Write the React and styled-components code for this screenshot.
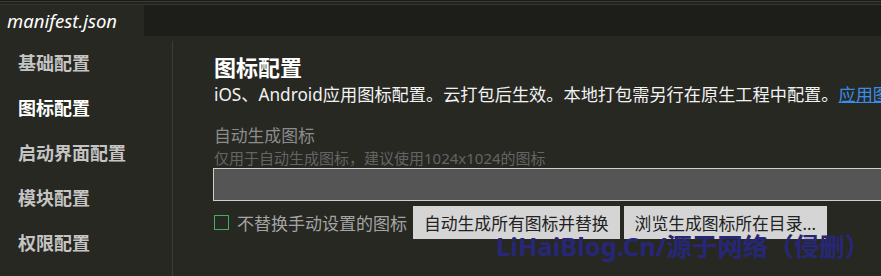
import styled, { createGlobalStyle } from "styled-components";

const GlobalStyle = createGlobalStyle`
  html, body {
    margin: 0;
    padding: 0;
    background: #272822;
  }
  * {
    box-sizing: border-box;
  }
`;

const FONT = `"Noto Sans", "Noto Sans CJK SC", sans-serif`;

const Window = styled.div`
  position: relative;
  width: 881px;
  height: 276px;
  overflow: hidden;
  background: #272822;
  font-family: ${FONT};
`;

const Strip = styled.div`
  height: 5px;
  background: linear-gradient(
    to bottom,
    #1b1c19 0px,
    #1b1c19 1px,
    #3a3b35 1px,
    #3a3b35 2px,
    #22231f 2px,
    #22231f 4px,
    #35362f 4px,
    #35362f 5px
  );
`;

const TabBar = styled.div`
  display: flex;
  height: 31px;
  background: #1d1e1a;
`;

const Tab = styled.div`
  width: 144px;
  padding-left: 7px;
  display: flex;
  align-items: center;
  background: ${({ active }) => (active ? "#272822" : "transparent")};
  color: #ffffff;
  font-style: italic;
  font-size: 18.5px;
`;

const Body = styled.div`
  display: flex;
  height: 240px;
`;

const Sidebar = styled.nav`
  width: 173px;
  flex-shrink: 0;
  margin-top: 5px;
  border-right: 1px solid #3b3c37;
`;

const NavItem = styled.div`
  height: 45px;
  line-height: 45px;
  padding-left: 18px;
  font-size: 18px;
  font-weight: bold;
  color: ${({ active }) => (active ? "#ffffff" : "#c4c4c4")};
`;

const Content = styled.main`
  flex: 1;
  min-width: 0;
  padding: 17px 0 0 41px;
  overflow: hidden;
  white-space: nowrap;
`;

const Title = styled.h1`
  margin: 0;
  font-size: 22px;
  line-height: 28px;
  font-weight: bold;
  color: #ffffff;
`;

const Desc = styled.p`
  margin: 2px 0 0;
  font-size: 17.2px;
  line-height: 24px;
  color: #f2f2f2;
`;

const Link = styled.a`
  color: #3a8ee8;
  text-decoration: underline;
`;

const Label = styled.div`
  margin-top: 17px;
  font-size: 16.8px;
  line-height: 24px;
  color: #8c8c8c;
`;

const Hint = styled.div`
  font-size: 15px;
  line-height: 20px;
  color: #646464;
`;

const PathInput = styled.div`
  width: 720px;
  height: 33px;
  margin-left: -1px;
  background: #555555;
  border: 1px solid #cfcfcf;
`;

const ActionRow = styled.div`
  display: flex;
  align-items: center;
  margin-top: 5px;
  height: 33px;
`;

const Check = styled.span`
  width: 15px;
  height: 15px;
  border: 1px solid #3fae5d;
  margin-right: 8px;
`;

const CheckLabel = styled.span`
  font-size: 17px;
  color: #a4a4a4;
  margin-right: 6px;
`;

const Button = styled.button`
  height: 33px;
  padding: 0 11px;
  margin-right: 4px;
  border: none;
  background: #d5d5d5;
  color: #222222;
  font-family: ${FONT};
  font-size: 16.8px;
`;

const Watermark = styled.div`
  position: absolute;
  left: 496px;
  top: 232px;
  font-size: 25.5px;
  line-height: 28px;
  font-weight: bold;
  color: #27277a;
  white-space: nowrap;
  pointer-events: none;
`;

const menu = ["基础配置", "图标配置", "启动界面配置", "模块配置", "权限配置"];

export default function App() {
  return (
    <>
      <GlobalStyle />
      <Window>
        <Strip />
        <TabBar>
          <Tab active>manifest.json</Tab>
        </TabBar>
        <Body>
          <Sidebar>
            {menu.map((m) => (
              <NavItem key={m} active={m === "图标配置"}>
                {m}
              </NavItem>
            ))}
          </Sidebar>
          <Content>
            <Title>图标配置</Title>
            <Desc>
              iOS、Android应用图标配置。云打包后生效。本地打包需另行在原生工程中配置。
              <Link>应用图标配置说明</Link>
            </Desc>
            <Label>自动生成图标</Label>
            <Hint>仅用于自动生成图标，建议使用1024x1024的图标</Hint>
            <PathInput />
            <ActionRow>
              <Check />
              <CheckLabel>不替换手动设置的图标</CheckLabel>
              <Button>自动生成所有图标并替换</Button>
              <Button>浏览生成图标所在目录...</Button>
            </ActionRow>
          </Content>
        </Body>
        <Watermark>LiHaiBlog.Cn/源于网络（侵删）</Watermark>
      </Window>
    </>
  );
}
